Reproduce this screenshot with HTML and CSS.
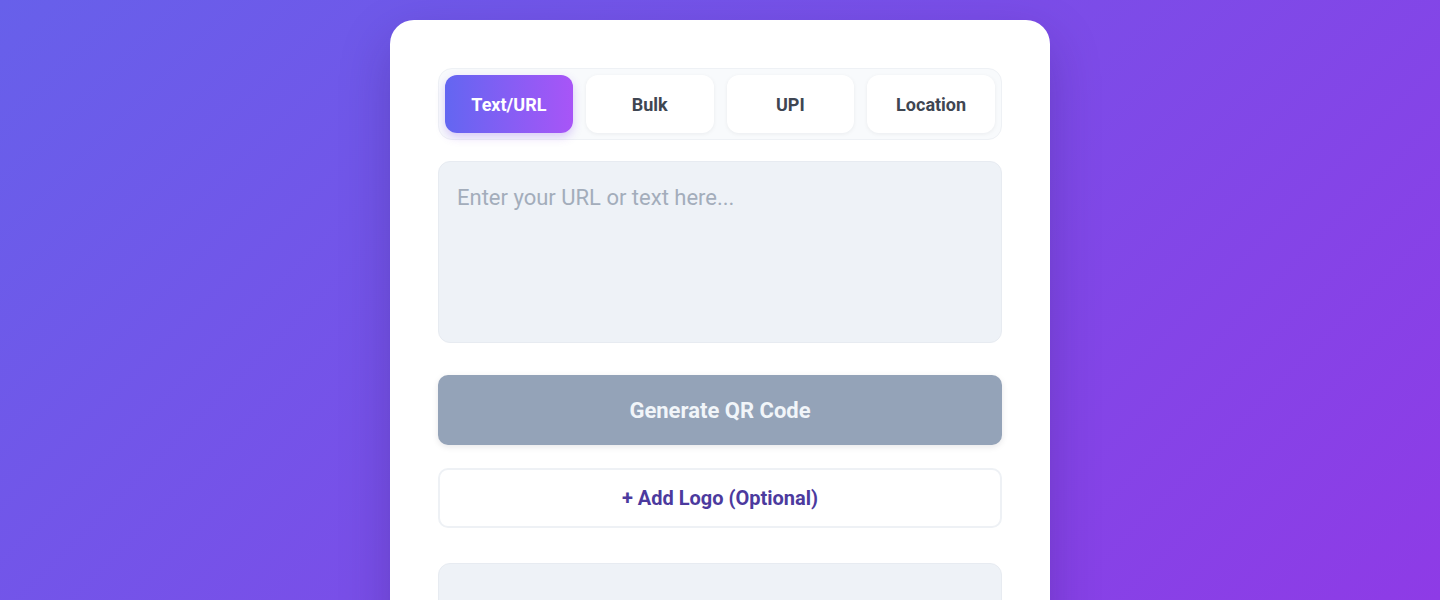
FILE: index.html
```html
<!DOCTYPE html>
<html lang="en">
<head>
<meta charset="utf-8">
<title>QR Code Generator</title>
<link rel="stylesheet" href="styles.css">
</head>
<body>
<main class="page">
  <section class="card">
    <nav class="tabs">
      <button class="tab tab-active">Text/URL</button>
      <button class="tab">Bulk</button>
      <button class="tab">UPI</button>
      <button class="tab">Location</button>
    </nav>
    <textarea class="input" placeholder="Enter your URL or text here..."></textarea>
    <button class="generate" disabled>Generate QR Code</button>
    <button class="logo-btn">+ Add Logo (Optional)</button>
    <div class="preview"></div>
  </section>
</main>
</body>
</html>
```
FILE: styles.css
```css
* { box-sizing: border-box; }
html, body { margin: 0; height: 100%; }
body {
  font-family: Roboto, "Liberation Sans", Arial, sans-serif;
  background: linear-gradient(135deg, #6760ea 0%, #8e3be6 100%);
  min-height: 100vh;
  overflow: hidden;
}
.page {
  display: flex;
  justify-content: center;
  padding-top: 20px;
}
.card {
  width: 660px;
  background: #ffffff;
  border-radius: 24px;
  padding: 48px 48px 40px;
  box-shadow: 0 20px 50px rgba(40, 20, 90, 0.25);
  display: flex;
  flex-direction: column;
}
.tabs {
  display: grid;
  grid-template-columns: repeat(4, 1fr);
  gap: 13px;
  padding: 6px;
  background: #f8fafc;
  border-radius: 14px;
  border: 1px solid #eef1f5;
}
.tab {
  height: 58px;
  border: none;
  border-radius: 12px;
  background: #ffffff;
  font-family: inherit;
  font-size: 18px;
  font-weight: 700;
  color: #3f4652;
  box-shadow: 0 1px 4px rgba(15, 23, 42, 0.06);
}
.tab-active {
  background: linear-gradient(90deg, #6366f1 0%, #a855f7 100%);
  color: #ffffff;
  box-shadow: 0 4px 10px rgba(124, 58, 237, 0.25);
}
.input {
  margin-top: 21px;
  height: 182px;
  resize: none;
  background: #eef2f7;
  border: 1px solid #e7ebf1;
  border-radius: 12px;
  padding: 23px 18px;
  font-family: inherit;
  font-size: 22px;
  color: #334155;
}
.input::placeholder { color: #a3adbb; }
.generate {
  margin-top: 32px;
  height: 70px;
  border: none;
  border-radius: 10px;
  background: #94a3b8;
  color: #f1f5f9;
  font-family: inherit;
  font-size: 22px;
  font-weight: 700;
  box-shadow: 0 2px 6px rgba(15, 23, 42, 0.1);
}
.logo-btn {
  margin-top: 23px;
  height: 60px;
  background: #ffffff;
  border: 2px solid #eef1f5;
  border-radius: 10px;
  color: #4c3a9e;
  font-family: inherit;
  font-size: 20px;
  font-weight: 700;
}
.preview {
  margin-top: 35px;
  height: 140px;
  background: #eef2f7;
  border: 1px solid #e7ebf1;
  border-radius: 12px;
}
```
